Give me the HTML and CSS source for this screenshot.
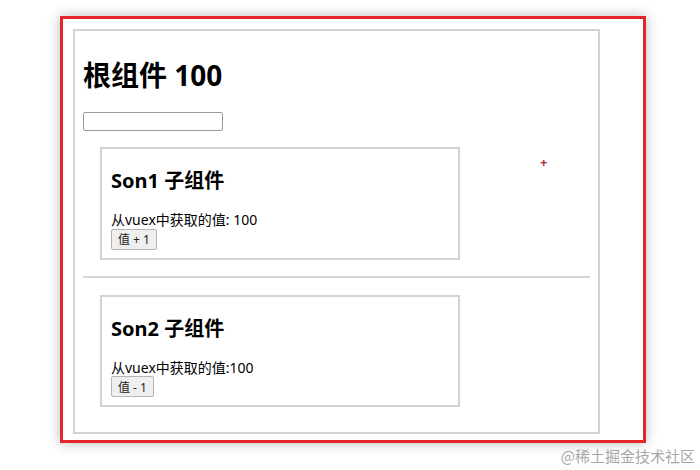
FILE: index.html
```html
<!DOCTYPE html>
<html lang="zh-CN">
<head>
<meta charset="UTF-8">
<meta name="viewport" content="width=device-width, initial-scale=1.0">
<title>vuex demo</title>
<link rel="stylesheet" href="styles.css">
</head>
<body>

<div class="frame">
    <div class="root">
        <h1>根组件 100</h1>
        <input type="text" class="field">
        <div class="son">
            <h2>Son1 子组件</h2>
            <div class="val">从vuex中获取的值: 100</div>
            <button type="button">值 + 1</button>
        </div>
        <hr>
        <div class="son">
            <h2>Son2 子组件</h2>
            <div class="val">从vuex中获取的值:100</div>
            <button type="button">值 - 1</button>
        </div>
    </div>
    <span class="cursor">+</span>
</div>
<div class="mark">@稀土掘金技术社区</div>

</body>
</html>
```

FILE: styles.css
```css
body {
    font-family: "Noto Sans", "Noto Sans CJK SC", sans-serif;
    background-color: #fff;
    color: #000;
    margin: 0;
    padding: 0;
}

.frame {
    position: relative;
    width: 570px;
    margin: 16px 0 0 60px;
    padding: 10px 0 6px 10px;
    box-sizing: content-box;
    border: 3px solid #e3262a;
    box-shadow: 0 0 12px rgba(0, 0, 0, 0.28);
}

.root {
    width: 507px;
    padding: 28px 8px 25px 8px;
    border: 2px solid #d2d2d2;
}

h1 {
    font-size: 28px;
    line-height: 32px;
    font-weight: bold;
    margin: 0 0 21px 0;
}

.field {
    display: block;
    width: 140px;
    height: 19px;
    box-sizing: border-box;
    border: 1px solid #9a9a9a;
    border-radius: 2px;
    padding: 0;
    margin: 0 0 16px 0;
}

.son {
    width: 360px;
    box-sizing: border-box;
    margin-left: 17px;
    padding: 20px 9px 8px 9px;
    border: 2px solid #d2d2d2;
}

h2 {
    font-size: 20px;
    line-height: 24px;
    font-weight: bold;
    margin: 0 0 19px 0;
}

.val {
    font-size: 14px;
    line-height: 15px;
}

button {
    font-family: "Noto Sans", "Noto Sans CJK SC", sans-serif;
    font-size: 12px;
    height: 21px;
    padding: 0 6px;
    background-color: #efefef;
    border: 1px solid #b5b5b5;
    border-radius: 2px;
    color: #222;
}

hr {
    border: none;
    border-top: 2px solid #d6d6d6;
    margin: 16px 0 17px 0;
}

.cursor {
    position: absolute;
    left: 477px;
    top: 136px;
    font-size: 13px;
    font-weight: bold;
    line-height: 14px;
    color: #a82a3a;
}

.mark {
    text-align: right;
    padding-right: 5px;
    margin-top: 3px;
    font-family: "Noto Sans CJK SC", sans-serif;
    font-size: 15px;
    line-height: 20px;
    color: #a8a8a8;
}
```
